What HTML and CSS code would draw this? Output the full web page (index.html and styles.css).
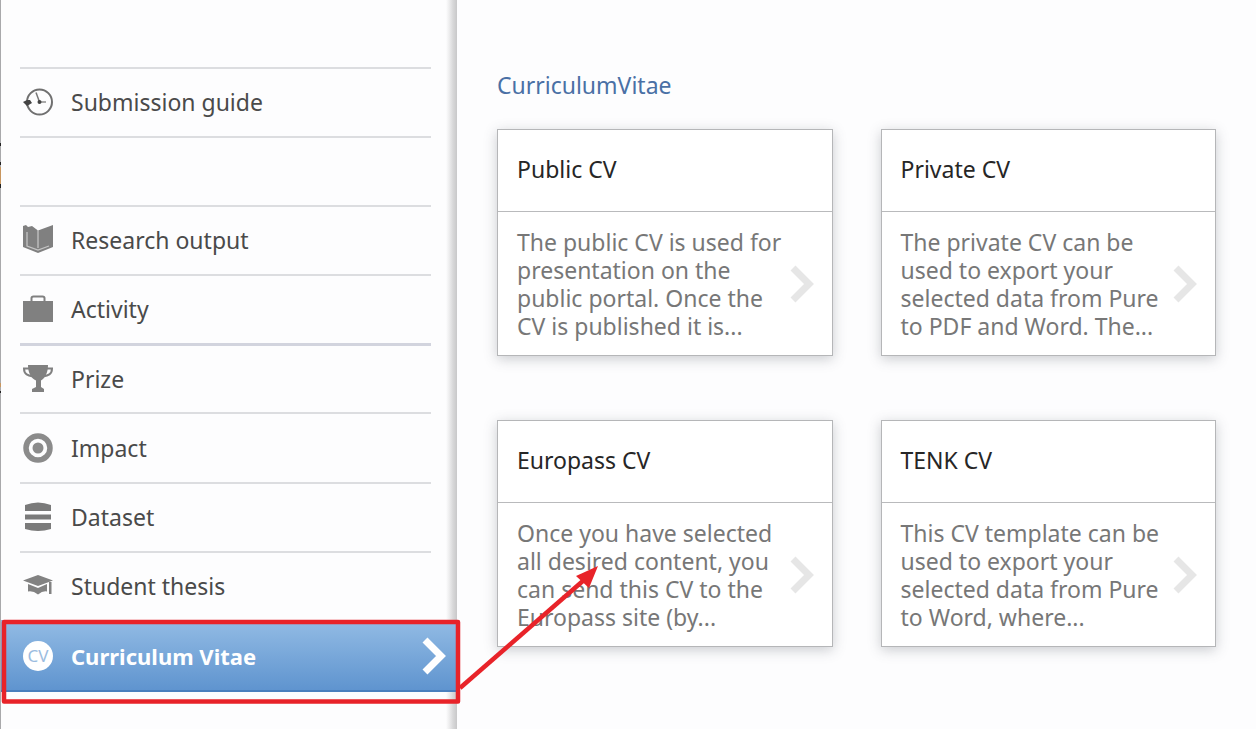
FILE: index.html
```html
<!DOCTYPE html>
<html lang="en">
<head>
<meta charset="utf-8">
<title>Curriculum Vitae</title>
<link rel="stylesheet" href="styles.css">
</head>
<body>
<div class="app">
  <nav class="sidebar" aria-label="Content types">
    <ul class="menu">
      <li class="row"><a class="item" href="#">
        <svg class="icon" viewBox="0 0 30 30" fill="none" stroke="#707070"><circle cx="16.500" cy="15" r="12.500" stroke-width="2"/><path d="M13 5.500l3.500 9.500" stroke="#777" stroke-width="1.500"/><path d="M16 15h7" stroke="#aaa" stroke-width="2"/><circle cx="16.500" cy="15" r="2" fill="#444" stroke="none"/><path d="M0 15l4-2h3l2 3-5 3z" fill="#444" stroke="none"/></svg>
        Submission guide</a></li>
      <li class="row" aria-hidden="true"></li>
      <li class="row"><a class="item" href="#">
        <svg class="icon" viewBox="0 0 30 30"><path d="M0 1l3-1 2 2 4-1 6 4.500L30 0v22l-15 6L0 22z" fill="#808080"/><path d="M4 7v14l11 4 11-4M15 5v18" fill="none" stroke="#c4c4c4" stroke-width="1.300"/></svg>
        Research output</a></li>
      <li class="row"><a class="item" href="#">
        <svg class="icon" viewBox="0 0 30 30"><rect y="7" width="30" height="21" fill="#808080"/><path d="M8.500 7V4q0-1.500 2-1.500h9q2 0 2 1.500v3" fill="none" stroke="#808080" stroke-width="2"/></svg>
        Activity</a></li>
      <li class="row row-divided"><a class="item" href="#">
        <svg class="icon" viewBox="0 0 30 30"><path d="M5 1h20c0 8-3 13-7 15.500V23l3 2v3H9v-3l4-2v-6.500C8 14 5 9 5 1z" fill="#808080"/><path d="M6 4.500H1c0 6 4 7 9 8M24 4.500h5c0 6-4 7-9 8" fill="none" stroke="#808080" stroke-width="2"/></svg>
        Prize</a></li>
      <li class="row row-tall"><a class="item" href="#">
        <svg class="icon" viewBox="0 0 30 30"><circle cx="15" cy="15" r="12" fill="none" stroke="#8b8b8b" stroke-width="5.500"/><circle cx="15" cy="15" r="5.500" fill="#8b8b8b"/></svg>
        Impact</a></li>
      <li class="row"><a class="item" href="#">
        <svg class="icon" viewBox="0 0 30 30" fill="#7a7a7a"><path d="M2 3q13-5 26 0v6H2zM2 12.500h26v5H2zM2 21h26v6q-13 4-26 0z"/></svg>
        Dataset</a></li>
      <li class="row"><a class="item" href="#">
        <svg class="icon" viewBox="0 0 30 30" fill="#828282"><path d="M15 4l15 5.500-15 5.500-15-5.500z"/><path d="M5 13l10 4 9-4v7.500q-4-1-9 3-5-4-10-3zM26 11h2.500v12H26z"/></svg>
        Student thesis</a></li>
      <li class="row row-active"><a class="item item-active" href="#" aria-current="page">
        <svg class="icon" viewBox="0 0 30 30"><circle cx="15" cy="15" r="15" fill="#fff"/><text class="badge-text" x="15" y="21" text-anchor="middle">CV</text></svg>
        Curriculum Vitae
        <svg class="chevron chevron-active" viewBox="0 0 24 38"><path d="M3 3l16 16L3 35"/></svg></a></li>
    </ul>
  </nav>
  <main class="content">
    <h1 class="heading">CurriculumVitae</h1>
    <div class="cards">
      <a class="card" href="#">
        <h2 class="card-title">Public CV</h2>
        <div class="card-body"><p class="card-text">The public CV is used for<br>presentation on the<br>public portal. Once the<br>CV is published it is...</p><svg class="chevron" viewBox="0 0 24 38"><path d="M3 3l16 16L3 35"/></svg></div>
      </a>
      <a class="card" href="#">
        <h2 class="card-title">Private CV</h2>
        <div class="card-body"><p class="card-text">The private CV can be<br>used to export your<br>selected data from Pure<br>to PDF and Word. The...</p><svg class="chevron" viewBox="0 0 24 38"><path d="M3 3l16 16L3 35"/></svg></div>
      </a>
      <a class="card" href="#">
        <h2 class="card-title">Europass CV</h2>
        <div class="card-body"><p class="card-text">Once you have selected<br>all desired content, you<br>can send this CV to the<br>Europass site (by...</p><svg class="chevron" viewBox="0 0 24 38"><path d="M3 3l16 16L3 35"/></svg></div>
      </a>
      <a class="card" href="#">
        <h2 class="card-title">TENK CV</h2>
        <div class="card-body"><p class="card-text">This CV template can be<br>used to export your<br>selected data from Pure<br>to Word, where...</p><svg class="chevron" viewBox="0 0 24 38"><path d="M3 3l16 16L3 35"/></svg></div>
      </a>
    </div>
  </main>
  <svg class="annotation" width="620" height="729" viewBox="0 0 620 729" aria-hidden="true">
    <rect x="4" y="622" width="454" height="79.500" fill="none" stroke="#e82329" stroke-width="4.500" stroke-linejoin="round"/>
    <path d="M460 688L584 580" stroke="#e82329" stroke-width="4.500"/>
    <path d="M598 566l-22 10 13 12z" fill="#e82329"/>
    <path d="M0 143h1v3H0zM0 162h1v3H0zM0 184h1v4H0zM0 391h1v2H0z" fill="#222"/>
    <path d="M0 167h1v17H0zM0 383h1v4H0z" fill="#c8965f"/>
  </svg>
</div>
</body>
</html>
```
FILE: styles.css
```css
* { box-sizing: border-box; }
body {
  margin: 0;
  background: #fff;
  color: #4a4a4a;
  font-family: "Noto Sans", "Open Sans", sans-serif;
  font-size: 23px;
  line-height: 28px;
}
a { color: inherit; text-decoration: none; }
.app {
  position: relative;
  display: flex;
  min-height: 729px;
  background: #fdfdfe;
}
.sidebar {
  flex: 0 0 457px;
  border-left: 1px solid #a9a9ab;
  padding-top: 67px;
  background: linear-gradient(to left, #c8c8c9, #d8d8d9 4px, #eeeeef 8px, #fdfdfe 11px);
}
.menu { list-style: none; margin: 0; padding: 0; }
.row {
  height: 69px;
  margin: 0 26px 0 19px;
  border-top: 2px solid #dcdde0;
}
.row-divided { border-top: 3px solid #d2d4de; }
.row-tall { height: 70px; }
.row-active {
  height: 72px;
  margin: 0;
  border-top: 1px solid #8fb4dc;
  border-bottom: 2px solid #4a7fbd;
  background: linear-gradient(#92bbe4, #5f94cf);
}
.item {
  display: flex;
  align-items: center;
  gap: 18px;
  height: 100%;
  padding: 0 0 1px 3px;
}
.item-active {
  padding: 0 11px 0 22px;
  color: #fff;
  font-size: 22px;
  font-weight: 700;
}
.icon { flex: none; width: 30px; height: 30px; }
.badge-text { font-size: 17px; font-weight: 400; fill: #9bbce0; }
.chevron {
  flex: none;
  width: 24px;
  height: 38px;
  fill: none;
  stroke: #e6e6e6;
  stroke-width: 7px;
}
.chevron-active { margin-left: auto; stroke: #fff; }
.content { flex: 1; padding: 71px 40px 0; }
.heading {
  margin: 0 0 30px;
  color: #4a70a5;
  font-size: 23px;
  font-weight: 400;
}
.cards {
  display: grid;
  grid-template-columns: 1fr 1fr;
  gap: 64px 48px;
}
.card {
  border: 1px solid #b5b6b8;
  background: #fff;
  box-shadow: 0 3px 12px rgba(70, 75, 85, 0.28);
}
.card-title {
  margin: 0;
  padding: 25px 19px 28px;
  border-bottom: 1px solid #b9babc;
  color: #262626;
  font-size: 23px;
  font-weight: 400;
}
.card-body {
  display: flex;
  align-items: center;
  justify-content: space-between;
  padding: 16px 18px 15px 19px;
}
.card-text { margin: 0; color: #777; white-space: nowrap; }
.annotation { position: absolute; top: 0; left: 0; pointer-events: none; }
```
